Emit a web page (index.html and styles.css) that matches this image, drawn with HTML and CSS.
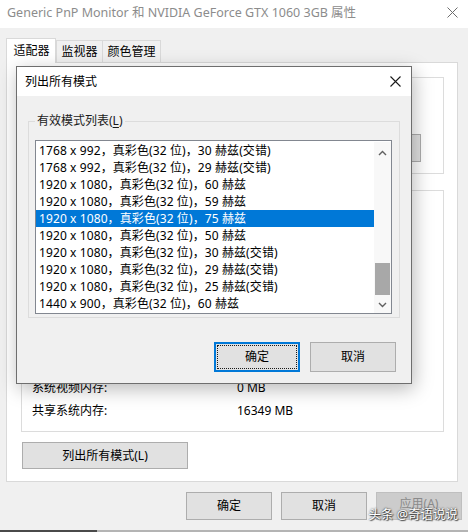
FILE: index.html
```html
<!DOCTYPE html>
<html lang="zh-CN">
<head>
<meta charset="utf-8">
<title>显示属性</title>
<link rel="stylesheet" href="styles.css">
</head>
<body>
<div class="window">
  <div class="titlebar">
    <span class="title">Generic PnP Monitor 和 NVIDIA GeForce GTX 1060 3GB 属性</span>
    <svg class="x-main" width="11" height="11" viewBox="0 0 11 11"><path d="M0.5 0.5 L10.5 10.5 M10.5 0.5 L0.5 10.5" stroke="#6d6d6d" stroke-width="1"/></svg>
  </div>
  <div class="client">
    <div class="tabs">
      <div class="tab active w1">适配器</div>
      <div class="tab w2">监视器</div>
      <div class="tab w3">颜色管理</div>
    </div>
    <div class="panel">
      <div class="group g1">
        <button class="btn prop">属性(P)</button>
      </div>
      <div class="group g2">
        <div class="inforow"><span>系统视频内存:</span><span>0 MB</span></div>
        <div class="inforow"><span>共享系统内存:</span><span>16349 MB</span></div>
      </div>
      <button class="btn listall">列出所有模式(L)</button>
    </div>
    <div class="footer">
      <button class="btn fbtn">确定</button>
      <button class="btn fbtn">取消</button>
      <button class="btn fbtn disabled">应用(A)</button>
    </div>
  </div>
  <div class="strip"><span class="strip-dark"></span></div>

  <div class="dialog">
    <div class="dlg-title">
      <span>列出所有模式</span>
      <svg class="x-dlg" width="11" height="11" viewBox="0 0 11 11"><path d="M0.5 0.5 L10.5 10.5 M10.5 0.5 L0.5 10.5" stroke="#1a1a1a" stroke-width="1.1"/></svg>
    </div>
    <div class="dlg-body">
      <fieldset class="modes">
        <legend>有效模式列表(<u>L</u>)</legend>
        <div class="listbox">
          <div class="rows">
            <div class="row">1768 x 992，真彩色(32 位)，30 赫兹(交错)</div>
            <div class="row">1768 x 992，真彩色(32 位)，29 赫兹(交错)</div>
            <div class="row">1920 x 1080，真彩色(32 位)，60 赫兹</div>
            <div class="row">1920 x 1080，真彩色(32 位)，59 赫兹</div>
            <div class="row sel">1920 x 1080，真彩色(32 位)，75 赫兹</div>
            <div class="row">1920 x 1080，真彩色(32 位)，50 赫兹</div>
            <div class="row">1920 x 1080，真彩色(32 位)，30 赫兹(交错)</div>
            <div class="row">1920 x 1080，真彩色(32 位)，29 赫兹(交错)</div>
            <div class="row">1920 x 1080，真彩色(32 位)，25 赫兹(交错)</div>
            <div class="row">1440 x 900，真彩色(32 位)，60 赫兹</div>
          </div>
          <div class="vscroll">
            <div class="arrow up"><svg width="9" height="6" viewBox="0 0 9 6"><path d="M1 5 L4.5 1.5 L8 5" fill="none" stroke="#606060" stroke-width="1.4"/></svg></div>
            <div class="track"><div class="thumb"></div></div>
            <div class="arrow down"><svg width="9" height="6" viewBox="0 0 9 6"><path d="M1 1 L4.5 4.5 L8 1" fill="none" stroke="#606060" stroke-width="1.4"/></svg></div>
          </div>
        </div>
      </fieldset>
      <div class="dlg-buttons">
        <button class="btn dbtn focus">确定</button>
        <button class="btn dbtn">取消</button>
      </div>
    </div>
  </div>

  <div class="watermark">头条 @奇语说说</div>
</div>
</body>
</html>
```
FILE: styles.css
```css
* { box-sizing: border-box; }
html, body { margin: 0; padding: 0; }
body {
  width: 468px;
  height: 532px;
  overflow: hidden;
  background: #f0f0f0;
  font-family: "Noto Sans", "Noto Sans CJK SC", sans-serif;
  font-size: 12px;
  color: #000;
}
.window {
  position: relative;
  width: 468px;
  height: 532px;
  display: flex;
  flex-direction: column;
  background: #f0f0f0;
}
.titlebar {
  height: 28px;
  background: #fff;
  display: flex;
  align-items: center;
  justify-content: space-between;
  padding: 0 10px 0 7px;
}
.title {
  color: #8c8c8c;
  font-size: 12.5px;
  line-height: 16px;
  margin-bottom: 2px;
}
.x-main { margin-bottom: 4px; }

.client {
  padding: 10px 6px 0 6px;
  display: flex;
  flex-direction: column;
}
.tabs {
  display: flex;
  align-items: flex-end;
  height: 24px;
}
.tab {
  height: 22px;
  border: 1px solid #d9d9d9;
  border-bottom: none;
  background: #f0f0f0;
  display: flex;
  align-items: center;
  justify-content: center;
  line-height: 14px;
}
.tab.active {
  height: 25px;
  margin-bottom: -1px;
  background: #fff;
  position: relative;
  z-index: 1;
}
.w1 { width: 50px; padding-left: 1px; }
.w2 { width: 47px; }
.w3 { width: 59px; margin-left: -1px; }

.panel {
  width: 452px;
  height: 420px;
  background: #fff;
  border: 1px solid #d9d9d9;
  padding: 14px 13px 0 14px;
  display: flex;
  flex-direction: column;
}
.group {
  border: 1px solid #dcdcdc;
}
.g1 {
  height: 97px;
  display: flex;
  align-items: flex-end;
  justify-content: flex-end;
  padding: 0 22px 11px 0;
}
.g2 {
  margin-top: 16px;
  height: 242px;
  display: flex;
  flex-direction: column;
  justify-content: flex-end;
  padding: 0 0 9px 10px;
}
.inforow {
  display: grid;
  grid-template-columns: 205px 1fr;
  line-height: 23px;
}

.btn {
  font-family: inherit;
  font-size: 12px;
  color: #000;
  background: #e1e1e1;
  border: 1px solid #adadad;
  padding: 0;
  margin: 0;
  line-height: 14px;
}
.prop { width: 86px; height: 28px; }
.listall {
  margin-top: 10px;
  margin-left: 1px;
  width: 166px;
  height: 27px;
}
.footer {
  margin-top: 10px;
  display: flex;
  justify-content: flex-end;
  gap: 9px;
}
.fbtn { width: 86px; height: 28px; }
.fbtn.disabled {
  background: #cccccc;
  border-color: #bfbfbf;
  color: #8a8a8a;
  padding-bottom: 4px;
}
.strip {
  margin-top: auto;
  height: 2px;
  background: #b4b4b4;
  display: flex;
}
.strip-dark {
  width: 97px;
  background: #4a4a4a;
}

/* modal dialog over the property sheet */
.dialog {
  position: absolute;
  left: 16px;
  top: 66px;
  width: 396px;
  height: 318px;
  border: 1px solid #6e6e6e;
  background: #f0f0f0;
  box-shadow: 2px 5px 18px rgba(0, 0, 0, 0.28);
  display: flex;
  flex-direction: column;
  z-index: 5;
}
.dlg-title {
  height: 29px;
  background: #fff;
  display: flex;
  align-items: center;
  justify-content: space-between;
  padding: 0 10px 0 8px;
  line-height: 16px;
}
.dlg-body {
  padding: 0 11px 0 11px;
  display: flex;
  flex-direction: column;
}
.modes {
  margin: 17px 0 0 0;
  width: 372px;
  border: 1px solid #dcdcdc;
  padding: 11px 7px 3px 6px;
  min-width: 0;
}
.modes legend {
  padding: 0 2px;
  margin-left: 0;
  line-height: 16px;
  color: #1a1a1a;
}
.modes legend u { text-decoration-thickness: 1px; text-underline-offset: 2px; }

.listbox {
  height: 174px;
  background: #fff;
  border: 1px solid #828790;
  padding-top: 1px;
  display: grid;
  grid-template-columns: 1fr 17px;
}
.rows { display: flex; flex-direction: column; }
.row {
  height: 17px;
  line-height: 17px;
  padding-left: 3px;
  white-space: nowrap;
  letter-spacing: 0.1px;
}
.row.sel {
  background: #0078d7;
  color: #fff;
}
.vscroll {
  display: flex;
  flex-direction: column;
  height: 171px;
  background: #f8f8f8;
}
.arrow {
  height: 17px;
  display: flex;
  justify-content: center;
}
.arrow.up { align-items: flex-end; padding-bottom: 3px; }
.arrow.down { align-items: center; }
.track {
  flex: 1;
  display: flex;
  flex-direction: column;
  justify-content: flex-end;
  align-items: center;
}
.thumb {
  width: 15px;
  height: 32px;
  margin-bottom: 1px;
  background: #a8a8a8;
}
.dlg-buttons {
  margin-top: 24px;
  display: flex;
  justify-content: flex-end;
  gap: 10px;
  padding-right: 4px;
}
.dbtn { width: 86px; height: 30px; }
.dbtn.focus {
  position: relative;
  border: 2px solid #0078d7;
}
.dbtn.focus::after {
  content: "";
  position: absolute;
  inset: 1px;
  border: 1px dotted #1a1a1a;
}

.watermark {
  position: absolute;
  right: 10px;
  bottom: 9px;
  color: #fff;
  font-size: 12.5px;
  line-height: 16px;
  text-shadow: 0 0 2px rgba(0,0,0,0.9), 1px 1px 1px rgba(0,0,0,0.6);
  z-index: 6;
}
```
